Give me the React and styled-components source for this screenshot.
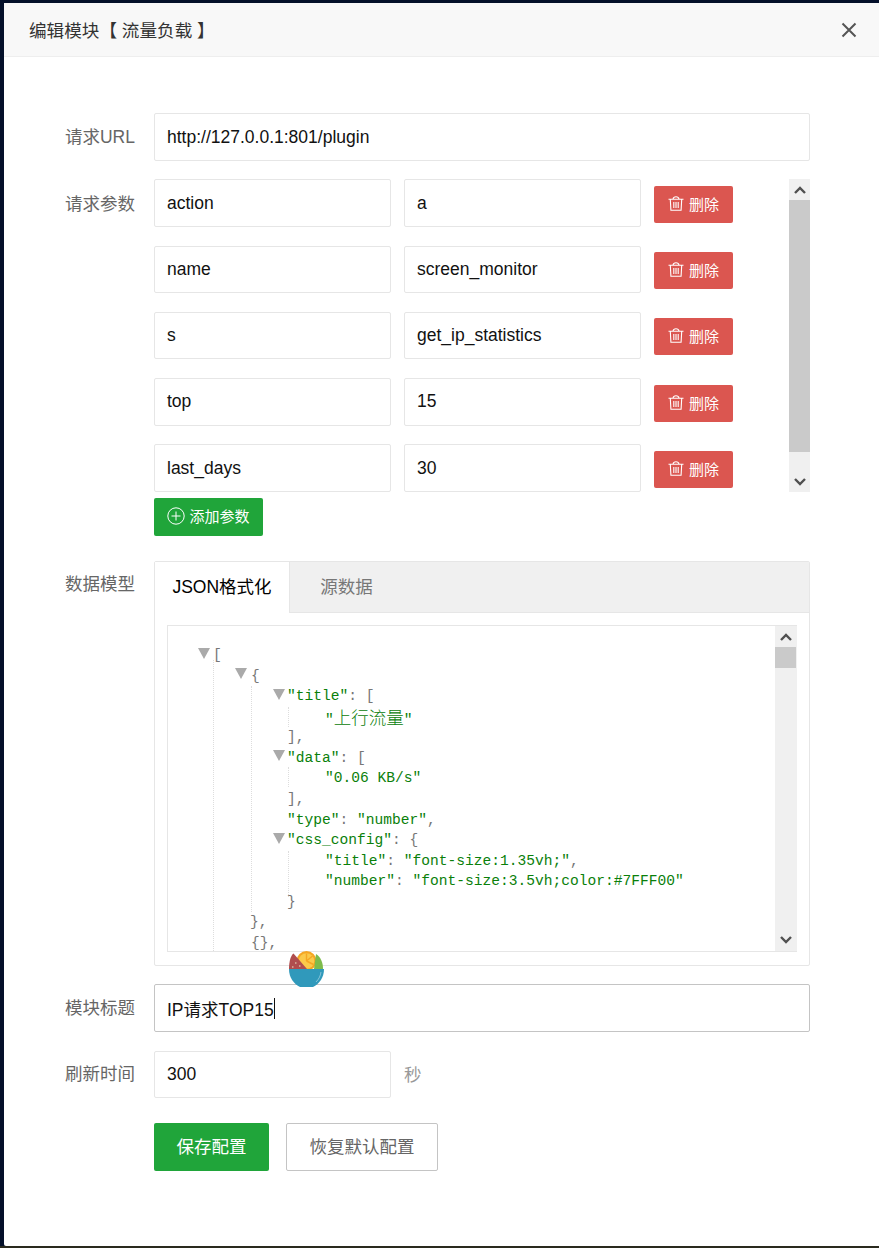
import React from "react";
import styled, { createGlobalStyle } from "styled-components";

const Global = createGlobalStyle`
  html, body { margin: 0; padding: 0; background: #04102a; }
  body { font-family: "Liberation Sans", "Noto Sans CJK SC", sans-serif; overflow: hidden; }
  * { box-sizing: border-box; }
`;
const Page = styled.div`
  width: 879px; height: 1248px; padding: 3px 0 0 4px; background: #04102a; overflow: hidden;
  border-bottom: 2px solid #2a2a1e;
`;
const Modal = styled.div`
  height: 1243px; background: #fff; border-radius: 2px 0 0 2px; position: relative;
`;
const Header = styled.div`
  height: 54px; background: #f8f8f8; border-bottom: 1px solid #eee; padding: 0 22px 0 25px;
  display: flex; align-items: center; justify-content: space-between;
  font-size: 17.6px; color: #333;
`;
const Close = styled.svg`width: 16px; height: 16px; stroke: #555; stroke-width: 2; fill: none;`;
const Body = styled.div`padding: 56px 69px 0 0;`;
const Row = styled.div`display: flex; margin-bottom: ${p => p.$mb ?? 18}px;`;
const Label = styled.div`
  width: 131px; margin-right: 19px; text-align: right; padding-top: ${p => p.$pt ?? 13}px;
  font-size: 17.5px; line-height: 22px; color: #666; flex: none;
`;
const Main = styled.div`flex: 1; min-width: 0;`;
const Input = styled.div`
  height: ${p => p.$h ?? 48}px; width: ${p => p.$w ? p.$w + "px" : "100%"};
  border: 1px solid ${p => p.$focus ? "#c4c4c4" : "#e6e6e6"}; border-radius: 2px;
  padding: 0 12px; display: flex; align-items: center; background: #fff; flex: none;
  font-size: 17.5px; color: #111;
`;
const Caret = styled.span`display: inline-block; width: 1px; height: 21px; background: #111;`;
const ParamsWrap = styled.div`display: flex; justify-content: space-between; height: 313px;`;
const ParamList = styled.div`display: flex; flex-direction: column; padding-top: 0.4px;`;
const ParamRow = styled.div`height: 66.25px; display: flex; gap: 13px; flex: none;`;
const DelBtn = styled.button`
  margin-top: 6.6px; width: 79px; height: 37px; border: 0; border-radius: 2px; background: #db5650; color: #fff;
  display: flex; align-items: center; justify-content: center; gap: 5px; padding: 0 0 2px;
  font: 15px "Liberation Sans", "Noto Sans CJK SC", sans-serif;
`;
const Bar = styled.div`width: ${p => p.$w ?? 21}px; height: 100%; background: #f0f0f0; display: flex; flex-direction: column; flex: none;`;
const Arrow = styled.div`height: ${p => p.$h ?? 21}px; display: flex; align-items: center; justify-content: center; flex: none;`;
const Thumb = styled.div`height: ${p => p.$h}px; width: 21px; background: #cacaca; flex: none;`;
const Spacer = styled.div`flex: 1;`;
const Chevron = styled.svg`width: 12px; height: 8px; fill: none; stroke: #505050; stroke-width: 2.4;`;
const AddBtn = styled.button`
  margin-top: 6px; width: 109px; height: 38px; border: 0; border-radius: 2px; background: #20a53a; color: #fff;
  display: flex; align-items: center; justify-content: center; gap: 4px; padding: 0 0 3px;
  font: 15px "Liberation Sans", "Noto Sans CJK SC", sans-serif;
`;
const TabBox = styled.div`height: 405px; border: 1px solid #e6e6e6; border-radius: 2px;`;
const TabHead = styled.div`height: 51px; background: #f0f0f0; border-bottom: 1px solid #e6e6e6; display: flex;`;
const Tab = styled.div`
  width: ${p => p.$w}px; height: ${p => p.$active ? "51px" : "50px"}; background: ${p => p.$active ? "#fff" : "transparent"};
  border-right: 1px solid ${p => p.$active ? "#e6e6e6" : "transparent"};
  color: ${p => p.$active ? "#000" : "#777"}; font-size: 17.5px; line-height: 51px; text-align: center;
`;
const TabBody = styled.div`padding: 12px 12px 0;`;
const JsonBox = styled.div`height: 327px; border: 1px solid #e6e6e6; border-right: 0; display: flex; justify-content: space-between;`;
const Code = styled.div`
  padding-top: 19px; font-family: "Liberation Mono", monospace; font-size: 14.58px; line-height: 20.57px;
  color: #777; white-space: pre; overflow: hidden; flex: 1; position: relative;
`;
const Line = styled.div`height: 20.57px; padding-left: ${p => p.$x}px; position: relative;`;
const Str = styled.span`color: #0a800a;`;
const Cjk = styled.span`font-family: "Noto Sans CJK SC", sans-serif; font-size: 17.5px; line-height: 20px; font-weight: 300;`;
const Tri = styled.i`
  position: absolute; left: ${p => p.$x - 14}px; top: 2.5px; width: 0; height: 0;
  border-left: 6.5px solid transparent; border-right: 6.5px solid transparent; border-top: 11px solid #aaa;
`;
const Guide = styled.i`position: absolute; top: ${p => p.$t}px; height: ${p => p.$h}px; left: ${p => p.$x}px; border-left: 1px dotted #ddd;`;
const SaveBtn = styled.button`
  width: 115px; height: 48px; border: 0; border-radius: 2px; background: #20a53a; color: #fff;
  font: 17.5px "Liberation Sans", "Noto Sans CJK SC", sans-serif; padding: 0 0 3px;
`;
const ResetBtn = styled.button`
  width: 152px; height: 48px; border: 1px solid #c4c4c4; border-radius: 2px; background: #fff; color: #666;
  font: 17.5px "Liberation Sans", "Noto Sans CJK SC", sans-serif; padding: 0 0 3px; margin-left: 17px;
`;
const Unit = styled.span`font-size: 17.5px; color: #999; margin-left: 13px; align-self: center; padding-bottom: 3px;`;
const Flex = styled.div`display: flex;`;
const BowlIcon = styled.svg`position: absolute; left: 285px; top: 948px; width: 36px; height: 36px;`;

const Up = () => <Chevron viewBox="0 0 12 8"><path d="M1 7L6 2l5 5" /></Chevron>;
const Down = () => <Chevron viewBox="0 0 12 8"><path d="M1 1l5 5 5-5" /></Chevron>;
const Trash = () => (
  <svg width="16" height="15" viewBox="0 0 16 15" fill="none" stroke="#fff" strokeWidth="1.1">
    <path d="M.5 3.2h15M5 3c.3-1.6 1-2.2 3-2.2s2.7.6 3 2.2M2.300 3.500l.6 10.700h10.200l.6-10.700M5.800 6v6M8 6v6M10.200 6v6" />
  </svg>
);
const PlusCircle = () => (
  <svg width="18" height="18" viewBox="0 0 18 18" fill="none" stroke="#fff" strokeWidth="1">
    <circle cx="9" cy="9" r="8.2" /><path d="M4.500 9h9M9 4.500v9" />
  </svg>
);
const params = [["action", "a"], ["name", "screen_monitor"], ["s", "get_ip_statistics"], ["top", "15"], ["last_days", "30"]];

export default function App() {
  return (
    <Page>
      <Global />
      <Modal>
        <Header>
          <span>编辑模块【 流量负载 】</span>
          <Close viewBox="0 0 16 16"><path d="M1.500 1.500l13 13M14.500 1.500l-13 13" /></Close>
        </Header>
        <Body>
          <Row>
            <Label>请求URL</Label>
            <Main><Input>http://127.0.0.1:801/plugin</Input></Main>
          </Row>
          <Row $mb={25}>
            <Label $pt={14}>请求参数</Label>
            <Main>
              <ParamsWrap>
                <ParamList>
                  {params.map(([k, v]) => (
                    <ParamRow key={k}>
                      <Input $w={237} $h={47.5}>{k}</Input>
                      <Input $w={237} $h={47.5}>{v}</Input>
                      <DelBtn><Trash />删除</DelBtn>
                    </ParamRow>
                  ))}
                </ParamList>
                <Bar>
                  <Arrow><Up /></Arrow>
                  <Thumb $h={252} />
                  <Spacer />
                  <Arrow><Down /></Arrow>
                </Bar>
              </ParamsWrap>
              <AddBtn><PlusCircle />添加参数</AddBtn>
            </Main>
          </Row>
          <Row>
            <Label $pt={12}>数据模型</Label>
            <Main>
              <TabBox>
                <TabHead>
                  <Tab $active $w={135}>JSON格式化</Tab>
                  <Tab $w={114}>源数据</Tab>
                </TabHead>
                <TabBody>
                  <JsonBox>
                    <Code>
                      <Guide $x={45} $t={34} $h={291} />
                      <Guide $x={83} $t={60} $h={226} />
                      <Guide $x={120} $t={81} $h={20} />
                      <Guide $x={120} $t={141} $h={20} />
                      <Guide $x={120} $t={225} $h={46} />
                      <Line $x={45}><Tri $x={44} />[</Line>
                      <Line $x={83}><Tri $x={81} />{"{"}</Line>
                      <Line $x={119}><Tri $x={119} /><Str>"title"</Str>: [</Line>
                      <Line $x={157}><Str>"<Cjk>上行流量</Cjk>"</Str></Line>
                      <Line $x={119}>],</Line>
                      <Line $x={119}><Tri $x={119} /><Str>"data"</Str>: [</Line>
                      <Line $x={157}><Str>"0.06 KB/s"</Str></Line>
                      <Line $x={119}>],</Line>
                      <Line $x={119}><Str>"type"</Str>: <Str>"number"</Str>,</Line>
                      <Line $x={119}><Tri $x={119} /><Str>"css_config"</Str>: {"{"}</Line>
                      <Line $x={157}><Str>"title"</Str>: <Str>"font-size:1.35vh;"</Str>,</Line>
                      <Line $x={157}><Str>"number"</Str>: <Str>"font-size:3.5vh;color:#7FFF00"</Str></Line>
                      <Line $x={119}>{"}"}</Line>
                      <Line $x={82}>{"},"}</Line>
                      <Line $x={83}>{"{},"}</Line>
                    </Code>
                    <Bar $w={22}>
                      <Arrow $h={21}><Up /></Arrow>
                      <Thumb $h={21} />
                      <Spacer />
                      <Arrow $h={22}><Down /></Arrow>
                    </Bar>
                  </JsonBox>
                </TabBody>
              </TabBox>
            </Main>
          </Row>
          <Row $mb={19}>
            <Label>模块标题</Label>
            <Main><Input $focus>IP请求TOP15<Caret /></Input></Main>
          </Row>
          <Row $mb={25}>
            <Label $pt={12}>刷新时间</Label>
            <Main><Flex><Input $w={237} $h={47}>300</Input><Unit>秒</Unit></Flex></Main>
          </Row>
          <Row>
            <Label />
            <Main><SaveBtn>保存配置</SaveBtn><ResetBtn>恢复默认配置</ResetBtn></Main>
          </Row>
        </Body>
        <BowlIcon viewBox="0 0 36 36">
          <circle cx="17.5" cy="10" r="10" fill="#f5a623" />
          <circle cx="17.5" cy="10" r="7.8" fill="#fbc94a" />
          <path d="M17.500 10V2.500M17.500 10l7 3.500M17.500 10l6-5" stroke="#f5a623" strokeWidth="1.4" />
          <path d="M27 3c5 3 7 9 7 15h-9z" fill="#7dbb4c" />
          <path d="M0 18C0 10 2 4 4.500 2.500L18 18z" fill="#b04d4e" />
          <path d="M6 12h1.500M10 15h1.500M3 16h1.500" stroke="#eec" strokeWidth="1" />
          <path d="M0 18h35c0 9-5 15-11 18H11C5 33 0 27 0 18z" fill="#3099bb" />
          <path d="M32 21c-.6 4-2 7-5 10" stroke="#fff" strokeWidth="0.7" fill="none" opacity="0.6" />
        </BowlIcon>
      </Modal>
    </Page>
  );
}
